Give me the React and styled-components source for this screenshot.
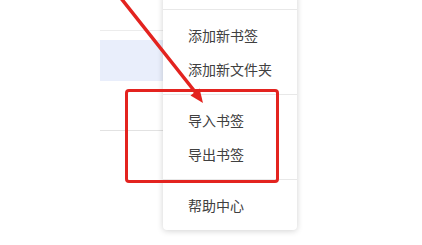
import React from 'react'
import styled, { createGlobalStyle } from 'styled-components'

const GlobalStyle = createGlobalStyle`
    html, body {
        margin: 0;
        padding: 0;
        background: #ffffff;
    }
    body {
        font-family: "Noto Sans CJK SC", "Noto Sans", sans-serif;
    }
`

const Page = styled.div`
    width: 422px;
    height: 245px;
    position: relative;
    overflow: hidden;
    background-color: #ffffff;
`

// list behind the menu
const ListPanel = styled.div`
    width: 90px;
    height: 101px;
    margin: 30px 0 0 100px;
    padding-top: 9px;
    box-sizing: border-box;
    border-top: 1px solid #ececec;
    border-bottom: 1px solid #e2e2e2;
`
const ListRow = styled.div`
    height: 41px;
    background-color: ${p => (p.$active ? '#e9eefb' : 'transparent')};
`

// dropdown menu (its upper part is scrolled off the top)
const Menu = styled.div`
    position: absolute;
    left: 163px;
    top: -6px;
    width: 134px;
    padding-top: 15px;
    background-color: #ffffff;
    border-radius: 0 0 4px 4px;
    box-shadow: 0 1px 6px rgba(0, 0, 0, 0.18);
    z-index: 2;
`
const MenuGroup = styled.div`
    padding: 8px 0;
    border-top: 1px solid #e8e8e8;
`
const MenuItem = styled.div`
    height: 34px;
    display: flex;
    align-items: center;
    padding-left: 25px;
    font-size: 14px;
    color: #404040;
    white-space: nowrap;
`

// red annotation
const HighlightBox = styled.div`
    position: absolute;
    left: 125px;
    top: 89px;
    width: 154px;
    height: 94px;
    box-sizing: border-box;
    border: 3px solid #e3231f;
    border-radius: 4px;
    z-index: 3;
`
const ArrowSvg = styled.svg`
    position: absolute;
    left: 0;
    top: 0;
    z-index: 4;
`

const groups = [
    ['添加新书签', '添加新文件夹'],
    ['导入书签', '导出书签'],
    ['帮助中心'],
]

function App() {
    return (
        <>
            <GlobalStyle />
            <Page>
                <ListPanel>
                    <ListRow $active />
                </ListPanel>

                <Menu>
                    {groups.map((items, i) => (
                        <MenuGroup key={i}>
                            {items.map(label => (
                                <MenuItem key={label}>{label}</MenuItem>
                            ))}
                        </MenuGroup>
                    ))}
                </Menu>

                <HighlightBox />
                <ArrowSvg width="422" height="245" viewBox="0 0 422 245">
                    <line x1="120" y1="-3" x2="196" y2="93" stroke="#e3231f" strokeWidth="3.5" strokeLinecap="round" />
                    <polygon points="203,103 190.5,95.5 199.5,88.5" fill="#e3231f" />
                </ArrowSvg>
            </Page>
        </>
    )
}

export default App
